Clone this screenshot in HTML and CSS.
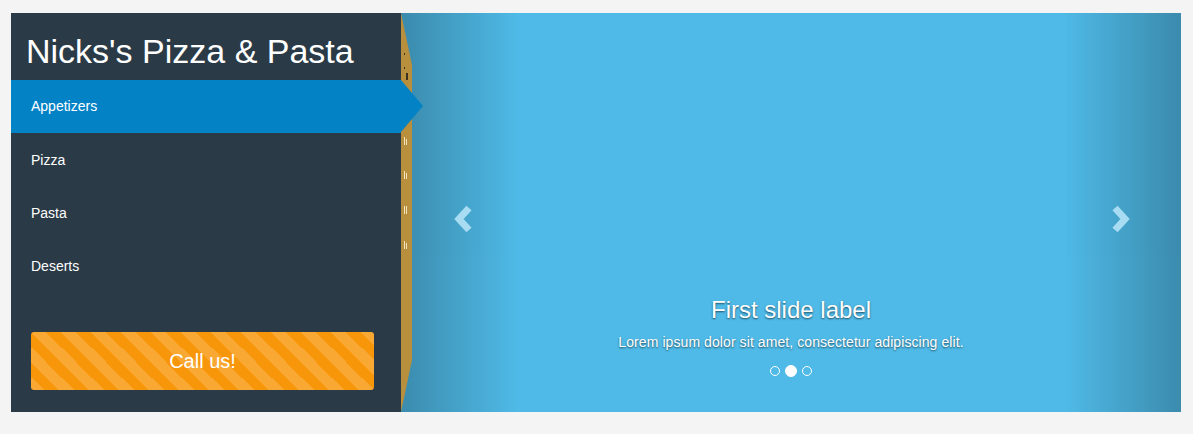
FILE: index.html
```html
<!DOCTYPE html>
<html>
<head>
<meta charset="utf-8">
<link rel="stylesheet" href="styles.css">
</head>
<body>
<div class="frame">
  <aside class="sidebar">
    <h1 class="brand">Nicks's Pizza &amp; Pasta</h1>
    <ul class="menu">
      <li class="menu-item active">Appetizers</li>
      <li class="menu-item">Pizza</li>
      <li class="menu-item">Pasta</li>
      <li class="menu-item">Deserts</li>
    </ul>
    <button class="call">Call us!</button>
  </aside>
  <section class="slide">
    <svg class="box-edge" width="11" height="399" viewBox="0 0 11 399">
      <polygon points="0,0 11,52 11,347 0,399" fill="#b8903d"/>
      <rect x="3" y="40" width="1" height="2" fill="#3b3320"/>
      <rect x="3" y="54" width="1" height="2" fill="#3b3320"/>
      <rect x="5" y="60" width="2" height="7" fill="#3b3320"/>
      <rect x="3" y="124" width="1" height="8" fill="#f2e4bd"/>
      <rect x="5" y="126" width="1" height="6" fill="#f2e4bd"/>
      <rect x="3" y="158" width="1" height="8" fill="#f2e4bd"/>
      <rect x="5" y="160" width="1" height="6" fill="#f2e4bd"/>
      <rect x="3" y="193" width="1" height="8" fill="#f2e4bd"/>
      <rect x="5" y="193" width="1" height="8" fill="#f2e4bd"/>
      <rect x="3" y="228" width="1" height="8" fill="#f2e4bd"/>
      <rect x="5" y="230" width="1" height="6" fill="#f2e4bd"/>
    </svg>
    <div class="control control-left">
      <svg width="22" height="30" viewBox="0 0 22 30"><polyline points="17,4 7,15 17,26" fill="none" stroke="#fff" stroke-width="7"/></svg>
    </div>
    <div class="control control-right">
      <svg width="22" height="30" viewBox="0 0 22 30"><polyline points="5,4 15,15 5,26" fill="none" stroke="#fff" stroke-width="7"/></svg>
    </div>
    <div class="caption">
      <h3 class="caption-title">First slide label</h3>
      <p class="caption-text">Lorem ipsum dolor sit amet, consectetur adipiscing elit.</p>
    </div>
    <ol class="indicators">
      <li class="dot"></li>
      <li class="dot active"></li>
      <li class="dot"></li>
    </ol>
  </section>
</div>
</body>
</html>
```
FILE: styles.css
```css
html, body {
  margin: 0;
  padding: 0;
  background: #f4f4f4;
  font-family: "Liberation Sans", Arial, sans-serif;
}
body {
  padding: 13px 12px 0 11px;
}
.frame {
  display: flex;
  height: 399px;
}
.sidebar {
  position: relative;
  z-index: 3;
  width: 390px;
  flex: none;
  background: #2a3b47;
  display: flex;
  flex-direction: column;
}
.brand {
  margin: 0;
  padding: 18px 0 9px 15px;
  font-size: 34px;
  line-height: 40px;
  font-weight: normal;
  color: #fff;
}
.menu {
  list-style: none;
  margin: 0;
  padding: 0;
}
.menu-item {
  position: relative;
  height: 53px;
  line-height: 55px;
  padding-left: 20px;
  font-size: 14px;
  color: #fff;
}
.menu-item.active {
  background: #0482c6;
  line-height: 53px;
}
.menu-item.active::after {
  content: "";
  position: absolute;
  top: 0;
  right: -22px;
  border-top: 26.5px solid transparent;
  border-bottom: 26.5px solid transparent;
  border-left: 22px solid #0482c6;
}
.call {
  margin: auto 27px 22px 20px;
  height: 58px;
  border: 0;
  border-radius: 3px;
  background-color: #f8960a;
  background-image: linear-gradient(45deg, rgba(255,255,255,.17) 25%, transparent 25%, transparent 50%, rgba(255,255,255,.17) 50%, rgba(255,255,255,.17) 75%, transparent 75%, transparent);
  background-size: 30px 30px;
  color: #fff;
  font-family: "Liberation Sans", Arial, sans-serif;
  font-size: 20px;
  padding: 0;
}
.slide {
  position: relative;
  flex: 1;
  background: #4fbae7;
  display: flex;
  flex-direction: column;
  align-items: center;
  justify-content: flex-end;
  padding-bottom: 35px;
}
.box-edge {
  position: absolute;
  left: 0;
  top: 0;
  z-index: 2;
}
.control {
  position: absolute;
  top: 0;
  bottom: 0;
  width: 15%;
  display: flex;
  align-items: center;
  justify-content: center;
  opacity: .5;
}
.control svg {
  margin-top: 12px;
}
.control-left {
  left: 0;
  background-image: linear-gradient(to right, rgba(0,0,0,.5) 0, rgba(0,0,0,0) 100%);
}
.control-right {
  right: 0;
  background-image: linear-gradient(to right, rgba(0,0,0,0) 0, rgba(0,0,0,.5) 100%);
}
.control-left svg { margin-left: 6px; }
.control-right svg { margin-right: 4px; }
.caption {
  position: relative;
  text-align: center;
  color: #fff;
  text-shadow: 0 1px 2px rgba(0,0,0,.6);
}
.caption-title {
  margin: 0;
  font-size: 24px;
  line-height: 28px;
  font-weight: normal;
}
.caption-text {
  margin: 8px 0 0;
  font-size: 14px;
  line-height: 20px;
  letter-spacing: 0.08px;
}
.indicators {
  position: relative;
  list-style: none;
  margin: 13px 0 0;
  padding: 0;
  display: flex;
  align-items: center;
  gap: 4px;
}
.dot {
  width: 10px;
  height: 10px;
  margin: 1px;
  box-sizing: border-box;
  border: 1px solid #fff;
  border-radius: 50%;
}
.dot.active {
  width: 12px;
  height: 12px;
  margin: 0;
  background: #fff;
}
```
